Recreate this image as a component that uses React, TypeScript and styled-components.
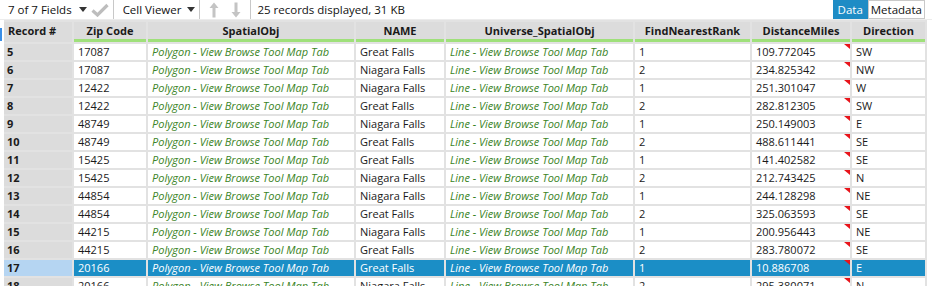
import React from 'react';
import styled, { createGlobalStyle } from 'styled-components';

const GlobalStyle = createGlobalStyle`
  html, body {
    margin: 0;
    padding: 0;
    background: #ffffff;
    overflow: hidden;
  }
  body {
    font-family: "Open Sans", "Noto Sans", sans-serif;
    color: #1a1a1a;
  }
`;

const COLUMNS = '68px 72px 206px 88px 187px 115px 98px 73px';
const SPATIAL_POLY = 'Polygon - View Browse Tool Map Tab';
const SPATIAL_LINE = 'Line - View Browse Tool Map Tab';

type Rec = {
  id: number;
  zip: string;
  name: string;
  rank: string;
  miles: string;
  dir: string;
};

const records: Rec[] = [
  { id: 5, zip: '17087', name: 'Great Falls', rank: '1', miles: '109.772045', dir: 'SW' },
  { id: 6, zip: '17087', name: 'Niagara Falls', rank: '2', miles: '234.825342', dir: 'NW' },
  { id: 7, zip: '12422', name: 'Niagara Falls', rank: '1', miles: '251.301047', dir: 'W' },
  { id: 8, zip: '12422', name: 'Great Falls', rank: '2', miles: '282.812305', dir: 'SW' },
  { id: 9, zip: '48749', name: 'Niagara Falls', rank: '1', miles: '250.149003', dir: 'E' },
  { id: 10, zip: '48749', name: 'Great Falls', rank: '2', miles: '488.611441', dir: 'SE' },
  { id: 11, zip: '15425', name: 'Great Falls', rank: '1', miles: '141.402582', dir: 'SE' },
  { id: 12, zip: '15425', name: 'Niagara Falls', rank: '2', miles: '212.743425', dir: 'N' },
  { id: 13, zip: '44854', name: 'Niagara Falls', rank: '1', miles: '244.128298', dir: 'NE' },
  { id: 14, zip: '44854', name: 'Great Falls', rank: '2', miles: '325.063593', dir: 'SE' },
  { id: 15, zip: '44215', name: 'Niagara Falls', rank: '1', miles: '200.956443', dir: 'NE' },
  { id: 16, zip: '44215', name: 'Great Falls', rank: '2', miles: '283.780072', dir: 'SE' },
  { id: 17, zip: '20166', name: 'Great Falls', rank: '1', miles: '10.886708', dir: 'E' },
  { id: 18, zip: '20166', name: 'Niagara Falls', rank: '2', miles: '295.380071', dir: 'N' },
];

const SELECTED = 17;

export default function App() {
  return (
    <>
      <GlobalStyle />
      <Frame>
        <Toolbar>
          <ToolLabel>7 of 7 Fields</ToolLabel>
          <Caret $left={7} />
          <CheckMark width="18" height="14" viewBox="0 0 18 14">
            <path d="M1.5 7.5 L6.5 12 L16.5 2" fill="none" stroke="#bdbdbd" strokeWidth="3.2" />
          </CheckMark>
          <Divider $left={4} />
          <ToolLabel>Cell Viewer</ToolLabel>
          <Caret $left={6} />
          <Divider $left={4} />
          <ArrowIcon $gap={0} width="10" height="16" viewBox="0 0 10 16">
            <path d="M5 0.5 L9.5 6 L6.5 6 L6.5 15.5 L3.5 15.5 L3.5 6 L0.5 6 Z" fill="#c4c4c4" />
          </ArrowIcon>
          <ArrowIcon $gap={12} width="10" height="16" viewBox="0 0 10 16">
            <path d="M5 15.5 L9.5 10 L6.5 10 L6.5 0.5 L3.5 0.5 L3.5 10 L0.5 10 Z" fill="#c4c4c4" />
          </ArrowIcon>
          <Divider $left={9} $right={6} />
          <ToolLabel>25 records displayed, 31 KB</ToolLabel>
          <Spacer />
          <ViewToggle>
            <ToggleButton $active>Data</ToggleButton>
            <ToggleButton>Metadata</ToggleButton>
          </ViewToggle>
        </Toolbar>

        <GridArea>
          <FocusMark />
          <Grid>
            <Row>
              <HeadCell $left>Record #</HeadCell>
              <HeadCell>Zip Code</HeadCell>
              <HeadCell>SpatialObj</HeadCell>
              <HeadCell>NAME</HeadCell>
              <HeadCell>Universe_SpatialObj</HeadCell>
              <HeadCell>FindNearestRank</HeadCell>
              <HeadCell>DistanceMiles</HeadCell>
              <HeadCell>Direction</HeadCell>
            </Row>
            {records.map((r) => {
              const sel = r.id === SELECTED;
              return (
                <Row key={r.id}>
                  <RecordCell $selected={sel}>{r.id}</RecordCell>
                  <Cell $selected={sel}>{r.zip}</Cell>
                  <Cell $selected={sel} $spatial>{SPATIAL_POLY}</Cell>
                  <Cell $selected={sel}>{r.name}</Cell>
                  <Cell $selected={sel} $spatial>{SPATIAL_LINE}</Cell>
                  <Cell $selected={sel}>{r.rank}</Cell>
                  <Cell $selected={sel}>
                    {r.miles}
                    <Flag />
                  </Cell>
                  <Cell $selected={sel}>{r.dir}</Cell>
                </Row>
              );
            })}
          </Grid>
        </GridArea>
      </Frame>
    </>
  );
}

// Styled Components
const Frame = styled.div`
  display: flex;
  flex-direction: column;
  width: 932px;
  height: 286px;
  overflow: hidden;
`;

const Toolbar = styled.div`
  display: flex;
  align-items: center;
  height: 20px;
  padding-left: 8px;
  padding-right: 7px;
  border-bottom: 1px solid #ececec;
  font-size: 11.5px;
`;

const ToolLabel = styled.span`
  white-space: nowrap;
  color: #111;
`;

const Caret = styled.span<{ $left: number }>`
  width: 0;
  height: 0;
  margin-left: ${(p) => p.$left}px;
  border-left: 4px solid transparent;
  border-right: 4px solid transparent;
  border-top: 5px solid #333;
`;

const CheckMark = styled.svg`
  margin-left: 4px;
`;

const ArrowIcon = styled.svg<{ $gap: number }>`
  margin-left: ${(p) => p.$gap}px;
`;

const Divider = styled.span<{ $left: number; $right?: number }>`
  align-self: stretch;
  width: 1px;
  background: #c8c8c8;
  margin-left: ${(p) => p.$left}px;
  margin-right: ${(p) => p.$right ?? 9}px;
`;

const Spacer = styled.div`
  flex: 1;
`;

const ViewToggle = styled.div`
  display: flex;
  height: 19px;
  align-self: flex-start;
`;

const ToggleButton = styled.div<{ $active?: boolean }>`
  display: flex;
  align-items: center;
  padding: 0 ${(p) => (p.$active ? 4 : 2)}px;
  font-size: 11.5px;
  background: ${(p) => (p.$active ? '#1e8cc5' : '#ffffff')};
  color: ${(p) => (p.$active ? '#ffffff' : '#111111')};
  border: 1px solid ${(p) => (p.$active ? '#1e8cc5' : '#c9c9c9')};
`;

const GridArea = styled.div`
  position: relative;
  flex: 1;
  padding-left: 4px;
`;

const FocusMark = styled.div`
  position: absolute;
  left: 0;
  top: 8px;
  width: 2px;
  height: 13px;
  background: #3a8ee6;
`;

const Grid = styled.div`
  display: flex;
  flex-direction: column;
  gap: 2px;
  width: max-content;
  padding: 2px 2px 0 0;
  background: #e2e2e2;
`;

const Row = styled.div`
  display: grid;
  grid-template-columns: ${COLUMNS};
  column-gap: 2px;
`;

const HeadCell = styled.div<{ $left?: boolean }>`
  height: 17px;
  line-height: 17px;
  background: #dcdcdc;
  border-bottom: ${(p) => (p.$left ? '0' : '3px solid #9fe07a')};
  padding: ${(p) => (p.$left ? '0 0 3px 4px' : '0')};
  text-align: ${(p) => (p.$left ? 'left' : 'center')};
  font-size: 11px;
  font-weight: 700;
  color: #1a1a1a;
  white-space: nowrap;
  overflow: hidden;
`;

const Cell = styled.div<{ $selected?: boolean; $spatial?: boolean }>`
  position: relative;
  height: 16px;
  line-height: 16px;
  padding: 0 4px;
  font-size: 11px;
  white-space: nowrap;
  overflow: hidden;
  background: ${(p) => (p.$selected ? '#1b8ec6' : '#ffffff')};
  color: ${(p) => (p.$selected ? '#ffffff' : p.$spatial ? '#3a8426' : '#1a1a1a')};
  font-style: ${(p) => (p.$spatial ? 'italic' : 'normal')};
`;

const RecordCell = styled.div<{ $selected?: boolean }>`
  height: 16px;
  line-height: 16px;
  padding: 0 3px;
  font-size: 11px;
  font-weight: 700;
  color: #1a1a1a;
  background: ${(p) => (p.$selected ? '#b5d5f2' : '#dcdcdc')};
`;

const Flag = styled.span`
  position: absolute;
  top: 0;
  right: 0;
  width: 0;
  height: 0;
  border-top: 5px solid #e8141b;
  border-left: 6px solid transparent;
`;
